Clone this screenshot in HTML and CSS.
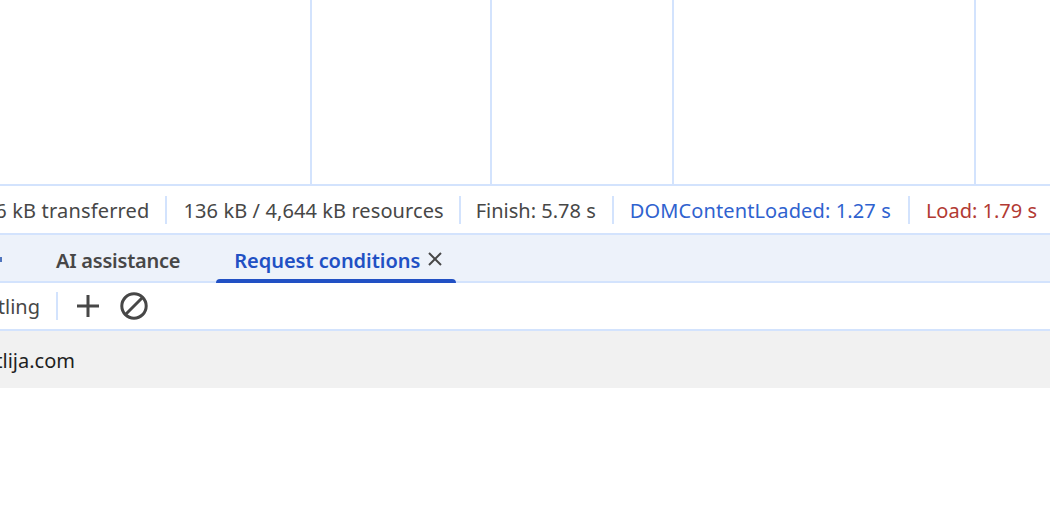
FILE: index.html
```html
<!DOCTYPE html>
<html lang="en">
<head>
<meta charset="utf-8">
<title>Request conditions</title>
<link rel="stylesheet" href="styles.css">
</head>
<body>
<div class="chart">
  <div class="col"></div>
  <div class="col"></div>
  <div class="col"></div>
  <div class="col"></div>
  <div class="col"></div>
</div>
<div class="status">
  <span class="stat transferred">316 kB transferred</span>
  <span class="stat resources">136 kB / 4,644 kB resources</span>
  <span class="stat finish">Finish: 5.78 s</span>
  <span class="stat blue">DOMContentLoaded: 1.27 s</span>
  <span class="stat red">Load: 1.79 s</span>
</div>
<div class="tabs">
  <span class="chev"></span>
  <span class="tab ai">AI assistance</span>
  <span class="tab active"><span class="tab-label">Request conditions</span>
    <svg class="close" width="16" height="16" viewBox="0 0 16 16"><path d="M2 2 14 14M14 2 2 14"/></svg>
  </span>
</div>
<div class="toolbar">
  <span class="clip"><span>Network throttling</span></span>
  <span class="sep"></span>
  <svg class="icon plus" width="24" height="24" viewBox="0 0 24 24"><path d="M12 1V23M1 12H23"/></svg>
  <svg class="icon block" width="28" height="28" viewBox="0 0 28 28"><circle cx="14" cy="14" r="12.2"/><path d="M5.5 22.5 22.5 5.5"/></svg>
</div>
<div class="row"><span class="clip wide"><span>example-xtlija.com</span></span></div>
</body>
</html>
```
FILE: styles.css
```css
* { box-sizing: border-box; }
html, body { margin: 0; height: 100%; background: #fff; overflow: hidden; }
body { font-family: "Noto Sans", "Open Sans", sans-serif; font-size: 20px; color: #474747; }
.chart { display: grid; grid-template-columns: 312px 180px 182px 302px 1fr; height: 186px; border-bottom: 2px solid #d3e3fd; }
.col { border-right: 2px solid #d3e3fd; }
.col:last-child { border-right: 0; }
.status { display: flex; justify-content: flex-end; align-items: center; height: 47px; padding-right: 13px; white-space: nowrap; }
.stat { display: flex; align-items: center; height: 28px; padding: 2px 17px 0 16px; border-left: 2px solid #d3e3fd; flex: none; }
.stat:first-child { border-left: 0; }
.stat:last-child { padding-right: 0; }
.transferred { letter-spacing: 0.17px; padding-right: 15px; }
.resources { letter-spacing: 0.09px; padding-left: 17px; padding-right: 15px; }
.finish { padding-left: 15px; padding-right: 16px; }
.blue { color: #2f62cf; letter-spacing: 0.12px; }
.red { color: #b23a33; }
.tabs { display: flex; align-items: stretch; height: 50px; background: #edf2fa; border-top: 2px solid #d3e3fd; border-bottom: 2px solid #d3e3fd; white-space: nowrap; }
.chev { width: 38px; flex: none; display: flex; align-items: center; }
.chev::before { content: ""; width: 2px; height: 5px; background: #4f74bd; margin-top: 2px; }
.tab { display: flex; align-items: center; padding: 4px 18px 0; font-weight: 600; }
.ai { letter-spacing: -0.23px; }
.tab.active { color: #2150c4; position: relative; gap: 7px; margin-left: 18px; padding: 4px 13px 0 18px; }
.tab-label { letter-spacing: -0.05px; }
.tab.active::after { content: ""; position: absolute; left: 0; right: 0; bottom: -2px; height: 4px; background: #2150c4; border-radius: 4px 4px 0 0; }
.close { fill: none; stroke: #474747; stroke-width: 2; margin-bottom: 3px; }
.toolbar { display: flex; align-items: center; height: 48px; border-bottom: 2px solid #d3e3fd; white-space: nowrap; }
.clip { display: flex; justify-content: flex-end; width: 40px; overflow: hidden; flex: none; }
.clip span { flex: none; }
.sep { width: 2px; height: 28px; background: #d3e3fd; margin: 0 18px 0 16px; }
.icon { fill: none; stroke: #474747; stroke-width: 3; flex: none; }
.block { margin-left: 20px; }
.row { display: flex; align-items: center; height: 57px; padding-top: 1px; background: #f1f1f1; color: #1f1f1f; white-space: nowrap; }
.clip.wide { width: 75px; }
```
